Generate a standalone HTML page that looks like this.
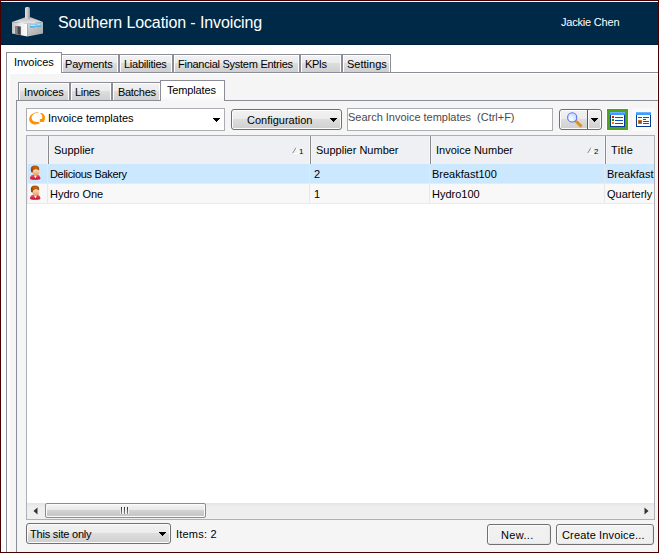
<!DOCTYPE html>
<html>
<head>
<meta charset="utf-8">
<title>Southern Location - Invoicing</title>
<style>
html,body{margin:0;padding:0;}
body{width:659px;height:553px;position:relative;overflow:hidden;background:#fff;font-family:"Liberation Sans",sans-serif;font-size:11px;color:#000;}
.a{position:absolute;box-sizing:border-box;}
.t{position:absolute;white-space:pre;line-height:13px;height:13px;}
.tab{position:absolute;box-sizing:border-box;border:1px solid #8b8e98;border-bottom:none;background:linear-gradient(#f2f2f2 0,#ebebeb 50%,#dddddd 50%,#cfcfcf 100%);box-shadow:inset 1px 1px 0 #fff, inset -1px 0 0 #fff;}
.tab.sel{background:#fff;box-shadow:none;}
.btn{position:absolute;box-sizing:border-box;border:1px solid #707070;border-radius:3px;background:linear-gradient(#f2f2f2 0,#ebebeb 50%,#dddddd 50%,#cfcfcf 100%);box-shadow:inset 0 0 0 1px #fcfcfc;}
.btn.flat{background:linear-gradient(#f1f1f1 0,#efefef 100%);box-shadow:inset 1px 1px 0 #fcfcfc,inset -1px -1px 0 #e6e6e6;}
</style>
</head>
<body>
<!-- window frame -->
<div class="a" style="left:0;top:0;width:659px;height:553px;background:#4b0000;"></div>
<div class="a" style="left:1px;top:1px;width:657px;height:551px;background:#fff;"></div>
<!-- header -->
<div class="a" id="hdr" style="left:1px;top:2px;width:657px;height:43px;background:#002947;border-bottom:1px solid #001f3b;"></div>
<svg class="a" id="factory" style="left:8px;top:6px;" width="40" height="34" viewBox="8 6 40 34">
  <defs>
    <linearGradient id="gch" x1="0" x2="1" y1="0" y2="0"><stop offset="0" stop-color="#e4e4e4"/><stop offset="0.5" stop-color="#c8c8c8"/><stop offset="1" stop-color="#8f8f8f"/></linearGradient>
    <linearGradient id="glw" x1="0" x2="1" y1="0" y2="0"><stop offset="0" stop-color="#c2c2c2"/><stop offset="0.55" stop-color="#ececec"/><stop offset="1" stop-color="#ffffff"/></linearGradient>
    <linearGradient id="grw" x1="0" x2="1" y1="0" y2="1"><stop offset="0" stop-color="#d4d4d4"/><stop offset="1" stop-color="#a4a4a4"/></linearGradient>
    <linearGradient id="grf" x1="0" x2="0" y1="0" y2="1"><stop offset="0" stop-color="#b8b8b8"/><stop offset="1" stop-color="#ececec"/></linearGradient>
  </defs>
  <path d="M12 22 L27.5 23.5 L27.5 36.5 L12 33.5 Z" fill="url(#glw)"/>
  <path d="M27.5 23.5 L43 22 L43 33.5 L27.5 36.5 Z" fill="url(#grw)"/>
  <path d="M12 22 L26 17 L30 17 L43 22 L27.5 23.8 Z" fill="url(#grf)"/>
  <rect x="25" y="7" width="5" height="12" rx="1.5" fill="url(#gch)"/>
  <path d="M15.4 26 L20.8 26.6 L20.8 35 L15.4 34 Z" fill="#454545"/>
  <path d="M15.4 26 L17.6 26.2 L17.6 34.4 L15.4 34 Z" fill="#8a8a8a"/>
  <path d="M30 24.8 L35.3 24.4 L35.3 27.4 L30 27.8 Z" fill="#4db4ee"/>
  <path d="M36.2 24.3 L41 23.9 L41 26.9 L36.2 27.3 Z" fill="#4db4ee"/>
  <path d="M30.5 25.5 L35 25.2 M36.6 25 L40.6 24.7" stroke="#d8f0ff" stroke-width="1"/>
</svg>
<div class="t" id="title" style="left:58px;top:13px;font-size:16px;line-height:19px;height:19px;color:#fff;letter-spacing:-0.11px;">Southern Location - Invoicing</div>
<div class="t" id="user" style="left:561px;top:16px;color:#fff;letter-spacing:-0.2px;">Jackie Chen</div>

<!-- outer tab control -->
<div class="a" id="opage" style="left:6px;top:72px;width:652px;height:480px;border:1px solid #8b8e98;border-right:none;border-bottom:none;background:#fff;"></div>
<div class="tab sel" style="left:6px;top:52px;width:56px;height:21px;"></div>
<div class="tab" style="left:61px;top:54px;width:58px;height:18px;"></div>
<div class="tab" style="left:119px;top:54px;width:54px;height:18px;"></div>
<div class="tab" style="left:173px;top:54px;width:127px;height:18px;"></div>
<div class="tab" style="left:300px;top:54px;width:42px;height:18px;"></div>
<div class="tab" style="left:342px;top:54px;width:49px;height:18px;"></div>
<div class="t" style="left:14px;top:56px;letter-spacing:-0.1px;">Invoices</div>
<div class="t" style="left:65px;top:58px;letter-spacing:-0.18px;">Payments</div>
<div class="t" style="left:124px;top:58px;letter-spacing:-0.25px;">Liabilities</div>
<div class="t" style="left:178px;top:58px;letter-spacing:-0.26px;">Financial System Entries</div>
<div class="t" style="left:305px;top:58px;letter-spacing:-0.4px;">KPIs</div>
<div class="t" style="left:347px;top:58px;">Settings</div>

<!-- inner panel -->
<div class="a" id="ipanel" style="left:10px;top:74px;width:647px;height:478px;background:#f5f5f5;"></div>
<div class="a" id="ipage" style="left:16px;top:100px;width:642px;height:452px;border:1px solid #8b8e98;border-right:none;border-bottom:none;background:#f5f5f5;"></div>
<div class="tab" style="left:18px;top:82px;width:52px;height:18px;"></div>
<div class="tab" style="left:70px;top:82px;width:42px;height:18px;"></div>
<div class="tab" style="left:112px;top:82px;width:49px;height:18px;"></div>
<div class="tab sel" style="left:160px;top:80px;width:65px;height:21px;background:linear-gradient(#fff 0,#fff 70%,#f5f5f5 100%);"></div>
<div class="t" style="left:24px;top:86px;letter-spacing:-0.1px;">Invoices</div>
<div class="t" style="left:75px;top:86px;letter-spacing:-0.3px;">Lines</div>
<div class="t" style="left:118px;top:86px;letter-spacing:-0.3px;">Batches</div>
<div class="t" style="left:167px;top:84px;letter-spacing:-0.15px;">Templates</div>

<!-- toolbar -->
<div class="a" id="combo" style="left:26px;top:108px;width:199px;height:23px;border:1px solid #abadb3;background:#fff;"></div>
<svg class="a" style="left:28px;top:110px;" width="20" height="17" viewBox="28 110 20 17">
  <path d="M38.4 112.1 C33 112.4 29.2 115.4 29.2 119.3 C29.2 122.6 32.4 124.7 35.6 124.6 C37.6 124.5 39.1 123.9 39.7 123.1 L38.9 121.7 C37.5 122.3 36 122.2 34.5 121.6 C32.8 120.8 31.8 119.9 31.8 118.6 C31 115.6 34 113 38.5 112.6 Z" fill="#ff9100"/>
  <path d="M40.2 113 C42.6 112.8 45 114.6 45 117.6 C45 119.4 44.5 120.8 43.9 121.6 L43.9 122.1 L39.8 122.1 L39.8 118.9 L41.9 118.9 C42.3 118 42.4 117 42.2 116.2 C41.9 114.9 41.2 113.9 40.2 113.5 Z" fill="#ff9100"/>
</svg>
<div class="t" style="left:48px;top:112px;">Invoice templates</div>
<svg class="a" style="left:213px;top:118px;" width="8" height="4" viewBox="0 0 8 4"><path d="M0 0h7v1h-1v1h-1v1h-1v1h-1v-1h-1v-1h-1v-1h-1z" fill="#000"/></svg>

<div class="btn" style="left:231px;top:109px;width:111px;height:21px;"></div>
<div class="t" style="left:247px;top:114px;">Configuration</div>
<svg class="a" style="left:330px;top:118px;" width="8" height="4" viewBox="0 0 8 4"><path d="M0 0h7v1h-1v1h-1v1h-1v1h-1v-1h-1v-1h-1v-1h-1z" fill="#000"/></svg>

<div class="a" id="search" style="left:347px;top:108px;width:206px;height:23px;border:1px solid #abadb3;background:#fff;"></div>
<div class="t" style="left:348px;top:111px;color:#4a4a4a;letter-spacing:-0.02px;">Search Invoice templates  (Ctrl+F)</div>

<div class="btn" style="left:559px;top:109px;width:43px;height:21px;"></div>
<div class="a" style="left:587px;top:110px;width:1px;height:19px;background:#5a5a5a;box-shadow:1px 0 0 #fafafa;"></div>
<svg class="a" style="left:565px;top:111px;" width="18" height="18" viewBox="565 111 18 18">
  <defs><radialGradient id="lens" cx="0.35" cy="0.7" r="0.8"><stop offset="0" stop-color="#ffffff"/><stop offset="1" stop-color="#b4d8ff"/></radialGradient>
  <linearGradient id="hnd" x1="0" x2="1" y1="1" y2="0"><stop offset="0" stop-color="#f4c868"/><stop offset="0.5" stop-color="#dc9424"/><stop offset="1" stop-color="#b87010"/></linearGradient></defs>
  <path d="M576.4 121.9 L580.5 125.9" stroke="url(#hnd)" stroke-width="3.2" stroke-linecap="round"/>
  <path d="M576.4 121.9 L580.5 125.9" stroke="#dc9424" stroke-width="2.2" stroke-linecap="round" opacity="0.6"/>
  <circle cx="572.2" cy="117.4" r="4.6" fill="url(#lens)" stroke="#6a6af0" stroke-width="1.1"/>
</svg>
<svg class="a" style="left:591px;top:118px;" width="8" height="4" viewBox="0 0 8 4"><path d="M0 0h7v1h-1v1h-1v1h-1v1h-1v-1h-1v-1h-1v-1h-1z" fill="#000"/></svg>

<div class="a" style="left:606px;top:108px;width:23px;height:23px;background:#fff;"></div>
<div class="a" style="left:607px;top:109px;width:21px;height:21px;background:#4fa31c;"></div>
<svg class="a" style="left:610px;top:112px;" width="15" height="15" viewBox="0 0 15 15">
  <rect x="0" y="0" width="15" height="15" fill="#0a3a96"/>
  <rect x="0" y="0" width="15" height="3" fill="#3d9cff"/>
  <rect x="0" y="0" width="15" height="1" fill="#6ab4ff"/>
  <rect x="1" y="3" width="13" height="11" fill="#fff"/>
  <rect x="2" y="4" width="2" height="2" fill="#d01010"/>
  <rect x="2" y="7" width="2" height="2" fill="#109010"/>
  <rect x="2" y="10" width="2" height="2" fill="#ff7a00"/>
  <rect x="5" y="5" width="8" height="1" fill="#1c4fb8"/>
  <rect x="5" y="8" width="8" height="1" fill="#1c4fb8"/>
  <rect x="5" y="11" width="8" height="1" fill="#1c4fb8"/>
</svg>
<div class="a" style="left:632px;top:108px;width:23px;height:23px;background:#fafafa;"></div>
<svg class="a" style="left:636px;top:112px;" width="15" height="15" viewBox="0 0 15 15">
  <rect x="0" y="0" width="15" height="15" fill="#0a3a96"/>
  <rect x="0" y="0" width="15" height="3" fill="#3d9cff"/>
  <rect x="0" y="0" width="15" height="1" fill="#6ab4ff"/>
  <rect x="1" y="3" width="13" height="11" fill="#fff"/>
  <rect x="2" y="5" width="4" height="1" fill="#1c4fb8"/>
  <rect x="7" y="5" width="6" height="1" fill="#1c4fb8"/>
  <rect x="7" y="7" width="3" height="1" fill="#1c4fb8"/>
  <rect x="7" y="9" width="6" height="1" fill="#1c4fb8"/>
  <rect x="7" y="11" width="6" height="1" fill="#1c4fb8"/>
  <rect x="2" y="8" width="4" height="4" fill="#c8741a"/>
  <rect x="3" y="9" width="2" height="2" fill="#7a4a2a"/>
</svg>

<!-- grid -->
<div class="a" id="grid" style="left:26px;top:135px;width:629px;height:385px;border:1px solid #adb0b6;background:#fff;"></div>
<div class="a" id="ghead" style="left:27px;top:136px;width:627px;height:28px;background:#eef0f4;"></div>
<div class="a" style="left:48px;top:136px;width:1px;height:28px;background:#8a8a8a;box-shadow:-1px 0 0 #f6f7fa,1px 0 0 #f6f7fa;"></div>
<div class="a" style="left:310px;top:136px;width:1px;height:28px;background:#8a8a8a;box-shadow:-1px 0 0 #f6f7fa,1px 0 0 #f6f7fa;"></div>
<div class="a" style="left:430px;top:136px;width:1px;height:28px;background:#8a8a8a;box-shadow:-1px 0 0 #f6f7fa,1px 0 0 #f6f7fa;"></div>
<div class="a" style="left:605px;top:136px;width:1px;height:28px;background:#8a8a8a;box-shadow:-1px 0 0 #f6f7fa,1px 0 0 #f6f7fa;"></div>
<div class="t" style="left:54px;top:144px;">Supplier</div>
<div class="t" style="left:316px;top:144px;">Supplier Number</div>
<div class="t" style="left:436px;top:144px;">Invoice Number</div>
<div class="t" style="left:611px;top:144px;letter-spacing:0.4px;">Title</div>
<svg class="a" style="left:292px;top:147px;" width="8" height="8" viewBox="0 0 8 8"><path d="M0.5 6.5 L4 0.5" stroke="#8c8c8c" stroke-width="1" fill="none"/><path d="M4 0.5 L7.5 6.5 L0.5 6.5" stroke="#fff" stroke-width="1" fill="none"/></svg>
<div class="t" style="left:299px;top:147px;font-size:8px;line-height:10px;height:10px;">1</div>
<svg class="a" style="left:587px;top:147px;" width="8" height="8" viewBox="0 0 8 8"><path d="M0.5 6.5 L4 0.5" stroke="#8c8c8c" stroke-width="1" fill="none"/><path d="M4 0.5 L7.5 6.5 L0.5 6.5" stroke="#fff" stroke-width="1" fill="none"/></svg>
<div class="t" style="left:594px;top:147px;font-size:8px;line-height:10px;height:10px;">2</div>

<div class="a" style="left:27px;top:164px;width:1px;height:40px;background:#ebebeb;"></div>
<div class="a" id="row1" style="left:28px;top:164px;width:626px;height:19px;background:#cce8ff;"></div>
<div class="a" id="row2" style="left:28px;top:184px;width:626px;height:19px;background:#f8f8f8;"></div>
<div class="a" style="left:27px;top:183px;width:627px;height:1px;background:#eaeaea;"></div>
<div class="a" style="left:27px;top:203px;width:627px;height:1px;background:#eaeaea;"></div>
<div class="a" style="left:47px;top:164px;width:1px;height:40px;background:#e8e8e8;"></div>
<div class="a" style="left:309px;top:164px;width:1px;height:40px;background:#e8e8e8;"></div>
<div class="a" style="left:429px;top:164px;width:1px;height:40px;background:#e8e8e8;"></div>
<div class="a" style="left:604px;top:164px;width:1px;height:40px;background:#e8e8e8;"></div>

<svg class="a person" style="left:29px;top:165px;" width="12" height="15" viewBox="0 0 12 15">
  <defs><radialGradient id="pgh1" cx="0.55" cy="0.3" r="0.7"><stop offset="0" stop-color="#d06a10"/><stop offset="1" stop-color="#8a3c0c"/></radialGradient>
  <linearGradient id="pgf1" x1="0" x2="0" y1="0" y2="1"><stop offset="0" stop-color="#fde3c4"/><stop offset="1" stop-color="#e2a062"/></linearGradient>
  <linearGradient id="pgb1" x1="0" x2="0" y1="0" y2="1"><stop offset="0" stop-color="#ff5468"/><stop offset="1" stop-color="#c00c26"/></linearGradient></defs>
  <path d="M1 13.2 C1 11.2 2.4 9.9 4.6 9.7 L8 9.7 C10 9.9 11.4 11.2 11.4 13.2 C11.4 14.3 10.2 14.7 6.2 14.7 C2.2 14.7 1 14.3 1 13.2 Z" fill="url(#pgb1)"/>
  <path d="M5 10.6 L6.4 13.4 L7.8 10.6 Z" fill="#fff"/>
  <ellipse cx="6" cy="4.2" rx="4.2" ry="3.6" fill="url(#pgh1)"/>
  <ellipse cx="6.9" cy="7.2" rx="3.4" ry="3.3" fill="url(#pgf1)"/>
  <path d="M2 6 C2 2.4 4 1 6.2 1 C8.6 1 10.2 2.6 10 5 C9 4.3 7.4 4.2 5.6 4.6 C4.4 4.9 3.6 5.8 3.4 7.6 C2.6 7.4 2 6.8 2 6 Z" fill="url(#pgh1)"/>
</svg>
<svg class="a person" style="left:29px;top:185px;" width="12" height="15" viewBox="0 0 12 15">
  <defs><radialGradient id="pgh2" cx="0.55" cy="0.3" r="0.7"><stop offset="0" stop-color="#d06a10"/><stop offset="1" stop-color="#8a3c0c"/></radialGradient>
  <linearGradient id="pgf2" x1="0" x2="0" y1="0" y2="1"><stop offset="0" stop-color="#fde3c4"/><stop offset="1" stop-color="#e2a062"/></linearGradient>
  <linearGradient id="pgb2" x1="0" x2="0" y1="0" y2="1"><stop offset="0" stop-color="#ff5468"/><stop offset="1" stop-color="#c00c26"/></linearGradient></defs>
  <path d="M1 13.2 C1 11.2 2.4 9.9 4.6 9.7 L8 9.7 C10 9.9 11.4 11.2 11.4 13.2 C11.4 14.3 10.2 14.7 6.2 14.7 C2.2 14.7 1 14.3 1 13.2 Z" fill="url(#pgb2)"/>
  <path d="M5 10.6 L6.4 13.4 L7.8 10.6 Z" fill="#fff"/>
  <ellipse cx="6" cy="4.2" rx="4.2" ry="3.6" fill="url(#pgh2)"/>
  <ellipse cx="6.9" cy="7.2" rx="3.4" ry="3.3" fill="url(#pgf2)"/>
  <path d="M2 6 C2 2.4 4 1 6.2 1 C8.6 1 10.2 2.6 10 5 C9 4.3 7.4 4.2 5.6 4.6 C4.4 4.9 3.6 5.8 3.4 7.6 C2.6 7.4 2 6.8 2 6 Z" fill="url(#pgh2)"/>
</svg>
<div class="t" style="left:50px;top:168px;letter-spacing:-0.32px;">Delicious Bakery</div>
<div class="t" style="left:314px;top:168px;">2</div>
<div class="t" style="left:432px;top:168px;">Breakfast100</div>
<div class="t" style="left:607px;top:168px;width:47px;overflow:hidden;">Breakfast</div>
<div class="t" style="left:50px;top:188px;">Hydro One</div>
<div class="t" style="left:314px;top:188px;">1</div>
<div class="t" style="left:432px;top:188px;">Hydro100</div>
<div class="t" style="left:607px;top:188px;width:47px;overflow:hidden;">Quarterly</div>

<!-- h scrollbar -->
<div class="a" id="hsb" style="left:27px;top:503px;width:627px;height:16px;background:linear-gradient(#e4e4e4 0,#eeeeee 25%,#efefef 100%);"></div>
<div class="a" id="thumb" style="left:45px;top:503px;width:161px;height:15px;border:1px solid #8c8c8c;border-radius:2px;background:linear-gradient(#f5f5f5 0,#e8e8e8 47%,#d2d2d2 50%,#c6c6c6 85%,#d8d8d8 100%);box-shadow:inset 0 0 0 1px #fafafa;"></div>
<div class="a" style="left:121px;top:507px;width:1px;height:7px;background:linear-gradient(#2a2a2a,#8a8a8a);box-shadow:1px 0 0 #f4f4f4,-1px 0 0 #ececec;"></div>
<div class="a" style="left:124px;top:507px;width:1px;height:7px;background:linear-gradient(#2a2a2a,#8a8a8a);box-shadow:1px 0 0 #f4f4f4,-1px 0 0 #ececec;"></div>
<div class="a" style="left:127px;top:507px;width:1px;height:7px;background:linear-gradient(#2a2a2a,#8a8a8a);box-shadow:1px 0 0 #f4f4f4,-1px 0 0 #ececec;"></div>
<svg class="a" style="left:33px;top:507px;" width="5" height="8" viewBox="0 0 5 8"><path d="M4.5 0.5 L4.5 7.5 L0.5 4 Z" fill="#333"/></svg>
<svg class="a" style="left:644px;top:507px;" width="5" height="8" viewBox="0 0 5 8"><path d="M0.5 0.5 L0.5 7.5 L4.5 4 Z" fill="#333"/></svg>

<!-- bottom bar -->
<div class="btn" style="left:26px;top:523px;width:145px;height:21px;"></div>
<div class="t" style="left:30px;top:528px;letter-spacing:-0.2px;">This site only</div>
<svg class="a" style="left:159px;top:532px;" width="8" height="4" viewBox="0 0 8 4"><path d="M0 0h7v1h-1v1h-1v1h-1v1h-1v-1h-1v-1h-1v-1h-1z" fill="#000"/></svg>
<div class="t" style="left:176px;top:528px;letter-spacing:0.2px;">Items: 2</div>
<div class="btn flat" style="left:487px;top:524px;width:64px;height:21px;"></div>
<div class="t" style="left:501px;top:529px;letter-spacing:0.35px;">New...</div>
<div class="btn flat" style="left:556px;top:524px;width:98px;height:21px;"></div>
<div class="t" style="left:562px;top:529px;letter-spacing:0.15px;">Create Invoice...</div>
</body>
</html>
